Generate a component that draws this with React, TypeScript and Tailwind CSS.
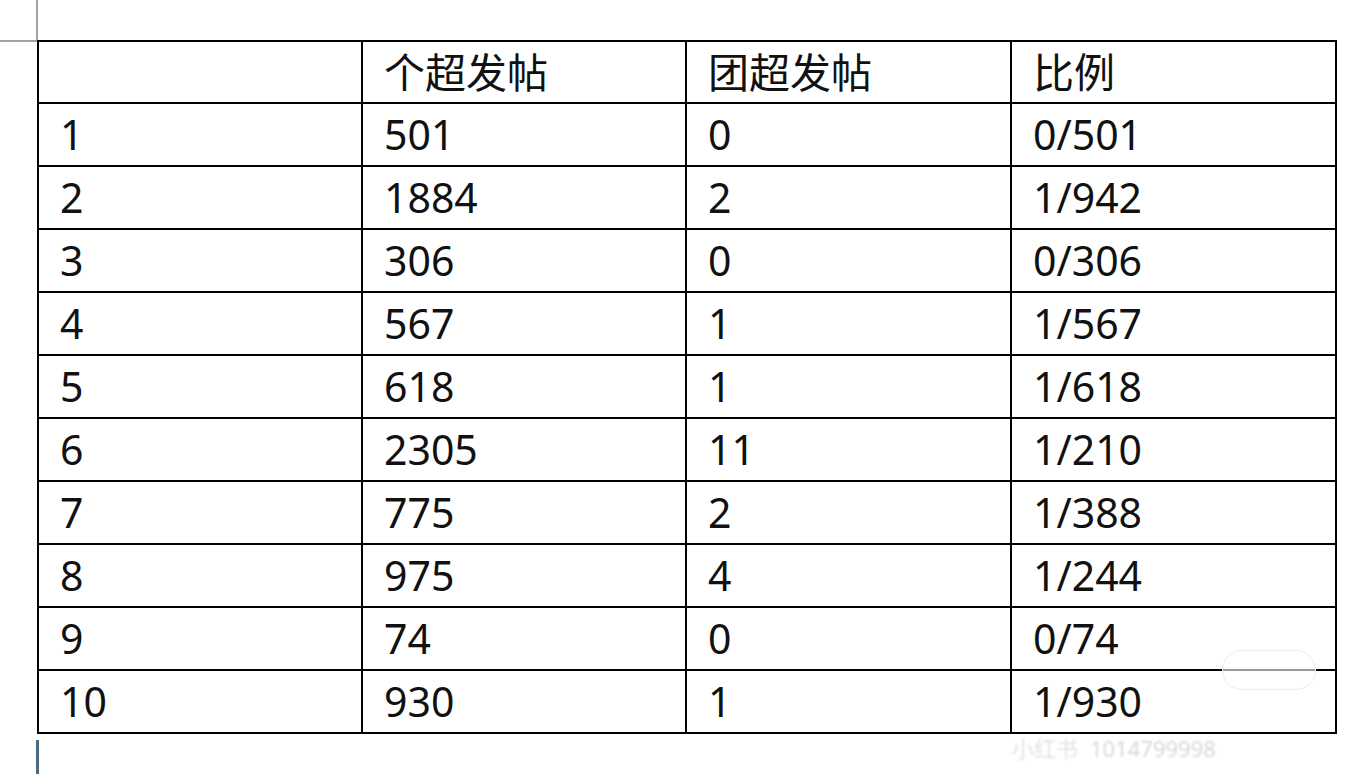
const ROWS: [string, string, string, string][] = [
  ["1", "501", "0", "0/501"],
  ["2", "1884", "2", "1/942"],
  ["3", "306", "0", "0/306"],
  ["4", "567", "1", "1/567"],
  ["5", "618", "1", "1/618"],
  ["6", "2305", "11", "1/210"],
  ["7", "775", "2", "1/388"],
  ["8", "975", "4", "1/244"],
  ["9", "74", "0", "0/74"],
  ["10", "930", "1", "1/930"],
];

const HEAD = ["", "个超发帖", "团超发帖", "比例"];

export default function App() {
  return (
    <div
      className="relative w-[1360px] h-[774px] overflow-hidden bg-white text-[#111]"
      style={{ fontFamily: '"Noto Sans", "Noto Sans CJK SC", sans-serif' }}
    >
      {/* page corner guides */}
      <div className="h-[40px] w-[38px] border-r-2 border-[#a3a3a3]" />
      <div className="flex items-start">
        <div className="h-[2px] w-[37px] shrink-0 bg-[#a3a3a3]" />
        <table className="w-[1298px] table-fixed border-collapse text-[41px] leading-none">
          <colgroup>
            <col className="w-[324px]" />
            <col className="w-[324px]" />
            <col className="w-[325px]" />
            <col className="w-[325px]" />
          </colgroup>
          <thead>
            <tr className="h-[62px]">
              {HEAD.map((h, i) => (
                <th key={i} className="border-2 border-black pl-[21px] text-left font-normal">
                  {h}
                </th>
              ))}
            </tr>
          </thead>
          <tbody>
            {ROWS.map((row) => (
              <tr key={row[0]} className="h-[63px]">
                {row.map((cell, i) => (
                  <td key={i} className="border-2 border-black pl-[21px]">
                    {cell}
                  </td>
                ))}
              </tr>
            ))}
          </tbody>
        </table>
      </div>
      {/* text cursor */}
      <div className="ml-[36px] mt-[6px] h-[40px] w-[3px] bg-[#4d6b80]" />

      {/* faint watermark */}
      <div className="absolute left-[1222px] top-[650px] h-[40px] w-[94px] rounded-full border border-[#ececec] bg-white/60" />
      <div className="absolute left-[1012px] top-[737px] flex items-center gap-3 text-[22px] leading-none text-[#e2e2e2] blur-[1px]">
        <span>小红书</span>
        <span className="text-[#d8d8d8]">1014799998</span>
      </div>
    </div>
  );
}
